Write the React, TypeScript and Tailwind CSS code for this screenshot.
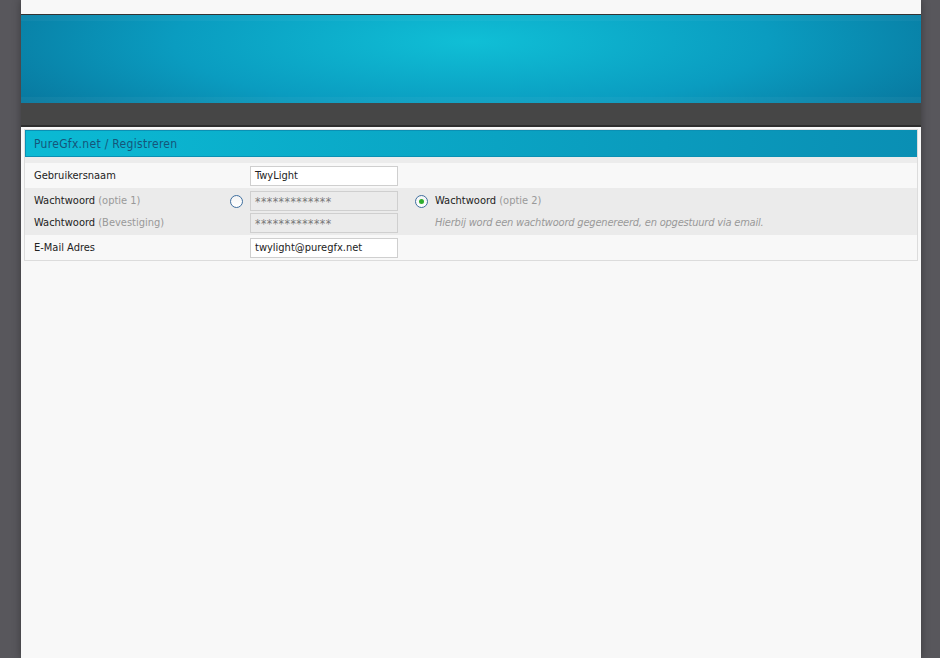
const font = { fontFamily: '"DejaVu Sans Condensed", "DejaVu Sans", Verdana, sans-serif' };

function Radio({ checked }: { checked?: boolean }) {
  return (
    <span className="flex h-[13px] w-[13px] items-center justify-center rounded-full border border-[#3f6f9f] bg-gradient-to-b from-[#f4f4f4] to-[#ffffff]">
      {checked && <span className="h-[5px] w-[5px] rounded-full bg-[#2fae2f]" />}
    </span>
  );
}

function Field({ value, disabled }: { value: string; disabled?: boolean }) {
  return (
    <div
      className={
        'flex h-[20px] w-[148px] border px-[4px] ' +
        (disabled
          ? 'items-start pt-[1px] text-[12px] tracking-[0.5px] border-[#cfcfcf] bg-[#ebebeb] text-[#777]'
          : 'items-center text-[11px] border-[#cfcfcf] bg-white text-[#222]')
      }
    >
      {value}
    </div>
  );
}

export default function App() {
  return (
    <div className="min-h-screen bg-[#58575c]" style={font}>
      <div className="ml-[21px] flex min-h-screen w-[900px] flex-col bg-[#f8f8f8] shadow-[0_0_8px_rgba(0,0,0,0.35)]">
        <div className="h-[15px] border-b border-[#333]" />
        <div className="relative h-[88px] bg-[radial-gradient(ellipse_60%_140%_at_50%_30%,#10bfd6_0%,#0a9cc0_55%,#08759c_100%)]">
          <div className="absolute inset-x-0 top-0 h-[6px] bg-white/[0.04]" />
          <div className="absolute inset-x-0 bottom-0 h-[6px] bg-white/[0.04]" />
        </div>
        <div className="h-[24px] border-b-2 border-[#2e2e2e] bg-[#464646]" />

        <div className="mx-[3px] mt-[2px] border border-[#dcdcdc]">
          <div className="flex h-[27px] items-center border border-[#0a90b4] bg-gradient-to-r from-[#0bbad4] to-[#0a8fb4] pl-[8px] text-[12px] tracking-[0.3px] text-[#15557a]">
            PureGfx.net / Registreren
          </div>
          <div className="h-[6px] bg-[#ececec]" />

          <div className="flex items-center pb-[2px] pt-[3px] text-[11px] text-[#222]">
            <div className="w-[225px] pl-[9px]">Gebruikersnaam</div>
            <Field value="TwyLight" />
          </div>

          <div className="flex bg-[#ebebeb] pb-[2px] pt-[3px] text-[11px] text-[#222]">
            <div className="flex flex-col gap-[2px]">
              <div className="flex h-[20px] items-center">
                <div className="w-[205px] pl-[9px]">
                  Wachtwoord <span className="text-[#999]">(optie 1)</span>
                </div>
                <div className="w-[20px]">
                  <Radio />
                </div>
                <Field value="*************" disabled />
              </div>
              <div className="flex h-[20px] items-center">
                <div className="w-[225px] pl-[9px]">
                  Wachtwoord <span className="text-[#999]">(Bevestiging)</span>
                </div>
                <Field value="*************" disabled />
              </div>
            </div>
            <div className="ml-[17px] flex flex-col gap-[2px]">
              <div className="flex h-[20px] items-center gap-[7px]">
                <Radio checked />
                <span>
                  Wachtwoord <span className="text-[#999]">(optie 2)</span>
                </span>
              </div>
              <div className="flex h-[20px] items-center pl-[20px] italic tracking-[-0.2px] text-[#999]">
                Hierbij word een wachtwoord gegenereerd, en opgestuurd via email.
              </div>
            </div>
          </div>

          <div className="flex items-center pb-[2px] pt-[3px] text-[11px] text-[#222]">
            <div className="w-[225px] pl-[9px]">E-Mail Adres</div>
            <Field value="twylight@puregfx.net" />
          </div>
        </div>
      </div>
    </div>
  );
}
